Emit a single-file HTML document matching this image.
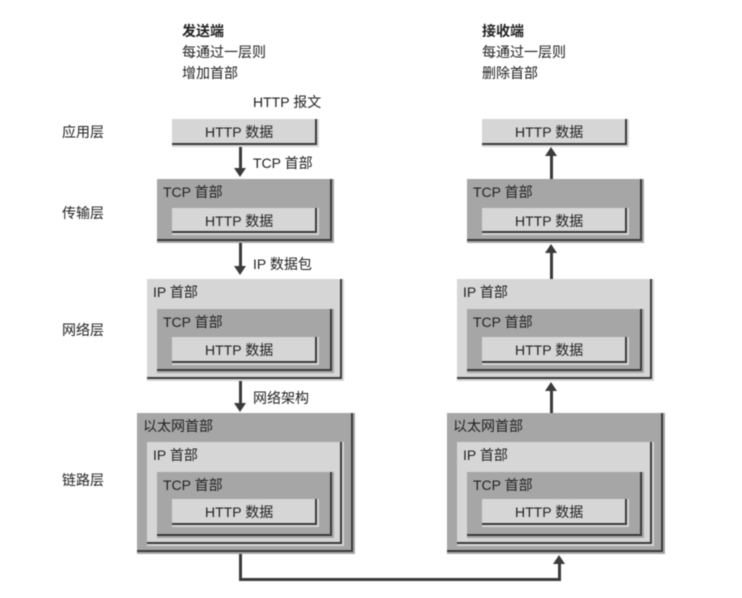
<!DOCTYPE html>
<html><head><meta charset="utf-8"><style>
body{margin:0;width:742px;height:598px;background:#fff;position:relative;overflow:hidden;font-family:"Liberation Sans","Noto Sans CJK SC",sans-serif;color:#222;}
#w{position:absolute;left:0;top:0;width:742px;height:598px;filter:blur(0.6px);}
.t{position:absolute;font-size:14px;line-height:16px;white-space:nowrap;}
.b{position:absolute;box-sizing:border-box;}
.L{background:#d6d6d6;box-shadow:inset -2px -2px 0 #d6d6d6,inset -4px -4px 0 #3a3a3a;}
.D{background:#a6a6a6;box-shadow:inset -2px -2px 0 #a6a6a6,inset -4px -4px 0 #3a3a3a;}
.ln{position:absolute;background:#3a3a3a;}
.ad{position:absolute;width:0;height:0;border-left:6px solid transparent;border-right:6px solid transparent;border-top:9px solid #3a3a3a;}
.au{position:absolute;width:0;height:0;border-left:6px solid transparent;border-right:6px solid transparent;border-bottom:9px solid #3a3a3a;}
</style></head><body><div id="w">
<div class="t" style="left:182px;top:23px;font-weight:bold">发送端</div>
<div class="t" style="left:182px;top:44px">每通过一层则</div>
<div class="t" style="left:182px;top:65px">增加首部</div>
<div class="t" style="left:482px;top:23px;font-weight:bold">接收端</div>
<div class="t" style="left:482px;top:44px">每通过一层则</div>
<div class="t" style="left:482px;top:65px">删除首部</div>
<div class="t" style="left:253px;top:94px">HTTP 报文</div>

<div class="t" style="left:62px;top:124px">应用层</div>
<div class="t" style="left:62px;top:205px">传输层</div>
<div class="t" style="left:62px;top:322px">网络层</div>
<div class="t" style="left:62px;top:472px">链路层</div>

<div class="b L" style="left:172px;top:119px;width:147px;height:28px"></div>
<div class="t" style="left:205px;top:124px">HTTP 数据</div>
<div class="ln" style="left:239px;top:147px;width:3px;height:24px"></div><div class="ad" style="left:234px;top:168px"></div>
<div class="t" style="left:253px;top:155px">TCP 首部</div>

<div class="b D" style="left:157px;top:179px;width:177px;height:64px"></div>
<div class="t" style="left:163px;top:184px">TCP 首部</div>
<div class="b L" style="left:172px;top:208px;width:147px;height:27px"></div>
<div class="t" style="left:205px;top:213px">HTTP 数据</div>
<div class="ln" style="left:239px;top:243px;width:3px;height:26px"></div><div class="ad" style="left:234px;top:266px"></div>
<div class="t" style="left:253px;top:256px">IP 数据包</div>

<div class="b L" style="left:147px;top:279px;width:197px;height:102px"></div>
<div class="t" style="left:153px;top:284px">IP 首部</div>
<div class="b D" style="left:157px;top:309px;width:177px;height:64px"></div>
<div class="t" style="left:163px;top:314px">TCP 首部</div>
<div class="b L" style="left:172px;top:337px;width:147px;height:28px"></div>
<div class="t" style="left:205px;top:342px">HTTP 数据</div>
<div class="ln" style="left:239px;top:381px;width:3px;height:24px"></div><div class="ad" style="left:234px;top:403px"></div>
<div class="t" style="left:253px;top:390px">网络架构</div>

<div class="b D" style="left:137px;top:413px;width:218px;height:141px"></div>
<div class="t" style="left:143px;top:418px">以太网首部</div>
<div class="b L" style="left:147px;top:442px;width:197px;height:104px"></div>
<div class="t" style="left:153px;top:447px">IP 首部</div>
<div class="b D" style="left:157px;top:472px;width:177px;height:66px"></div>
<div class="t" style="left:163px;top:477px">TCP 首部</div>
<div class="b L" style="left:172px;top:499px;width:147px;height:28px"></div>
<div class="t" style="left:205px;top:504px">HTTP 数据</div>

<div class="b L" style="left:482px;top:119px;width:147px;height:28px"></div>
<div class="t" style="left:515px;top:124px">HTTP 数据</div>
<div class="ln" style="left:550px;top:155px;width:3px;height:24px"></div><div class="au" style="left:545px;top:147px"></div>

<div class="b D" style="left:467px;top:179px;width:177px;height:64px"></div>
<div class="t" style="left:473px;top:184px">TCP 首部</div>
<div class="b L" style="left:482px;top:208px;width:147px;height:27px"></div>
<div class="t" style="left:515px;top:213px">HTTP 数据</div>
<div class="ln" style="left:550px;top:252px;width:3px;height:27px"></div><div class="au" style="left:545px;top:244px"></div>

<div class="b L" style="left:457px;top:279px;width:197px;height:102px"></div>
<div class="t" style="left:463px;top:284px">IP 首部</div>
<div class="b D" style="left:467px;top:309px;width:177px;height:64px"></div>
<div class="t" style="left:473px;top:314px">TCP 首部</div>
<div class="b L" style="left:482px;top:337px;width:147px;height:28px"></div>
<div class="t" style="left:515px;top:342px">HTTP 数据</div>
<div class="ln" style="left:550px;top:390px;width:3px;height:23px"></div><div class="au" style="left:545px;top:382px"></div>

<div class="b D" style="left:447px;top:413px;width:218px;height:141px"></div>
<div class="t" style="left:453px;top:418px">以太网首部</div>
<div class="b L" style="left:457px;top:442px;width:197px;height:104px"></div>
<div class="t" style="left:463px;top:447px">IP 首部</div>
<div class="b D" style="left:467px;top:472px;width:177px;height:66px"></div>
<div class="t" style="left:473px;top:477px">TCP 首部</div>
<div class="b L" style="left:482px;top:499px;width:147px;height:28px"></div>
<div class="t" style="left:515px;top:504px">HTTP 数据</div>

<div class="ln" style="left:239px;top:554px;width:3px;height:27px"></div>
<div class="ln" style="left:239px;top:578px;width:322px;height:3px"></div>
<div class="ln" style="left:558px;top:563px;width:3px;height:18px"></div>
<div class="au" style="left:553px;top:555px"></div>
</div></body></html>
